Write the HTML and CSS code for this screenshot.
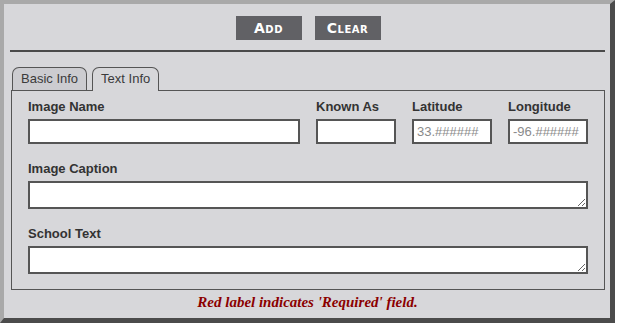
FILE: index.html
```html
<!DOCTYPE html>
<html lang="en">
<head>
    <meta charset="UTF-8">
    <title>Image Entry</title>
    <link rel="stylesheet" href="styles.css">
</head>
<body>
    <div class="frame">
        <div class="actions">
            <button class="action-btn">Add</button>
            <button class="action-btn">Clear</button>
        </div>
        <hr class="divider">

        <div class="tabs">
            <div class="tab">Basic Info</div>
            <div class="tab active">Text Info</div>
        </div>
        <div class="tab-panel">
            <div class="row top-row">
                <div class="field">
                    <label>Image Name</label>
                    <input type="text">
                </div>
                <div class="field">
                    <label>Known As</label>
                    <input type="text">
                </div>
                <div class="field">
                    <label>Latitude</label>
                    <input type="text" placeholder="33.######">
                </div>
                <div class="field">
                    <label>Longitude</label>
                    <input type="text" placeholder="-96.######">
                </div>
            </div>
            <div class="row">
                <div class="field">
                    <label>Image Caption</label>
                    <textarea></textarea>
                </div>
            </div>
            <div class="row">
                <div class="field">
                    <label>School Text</label>
                    <textarea></textarea>
                </div>
            </div>
        </div>
        <p class="note">Red label indicates 'Required' field.</p>
    </div>
</body>
</html>
```

FILE: styles.css
```css
* {
    margin: 0;
    padding: 0;
    box-sizing: border-box;
}

body {
    font-family: "Liberation Sans", Arial, sans-serif;
    background: #ffffff;
}

.frame {
    width: 615px;
    height: 323px;
    background: #d7d7da;
    border-style: solid;
    border-width: 4px 5px 5px 4px;
    border-color: #a9a9a9 #4b4b4b #4b4b4b #a9a9a9;
    padding: 12px 5px 0 6px;
}

.actions {
    display: flex;
    justify-content: center;
    gap: 13px;
    padding-left: 1px;
}

.action-btn {
    width: 66px;
    height: 24px;
    border: none;
    background: #616165;
    color: #ffffff;
    font-family: "DejaVu Sans", sans-serif;
    font-weight: bold;
    font-size: 14px;
    font-variant: small-caps;
    letter-spacing: 0.5px;
}

.divider {
    border: none;
    height: 2px;
    background: #4a4a4a;
    margin-top: 10px;
}

.tabs {
    display: flex;
    gap: 5px;
    margin-top: 15px;
    padding-left: 2px;
    position: relative;
    z-index: 1;
}

.tab {
    height: 23px;
    padding: 0 8px;
    border: 1px solid #555;
    border-bottom: none;
    border-radius: 7px 7px 0 0;
    background: #ccccd0;
    color: #3a3a3a;
    font-size: 13px;
    line-height: 22px;
}

.tab.active {
    background: #d7d7da;
    height: 24px;
    margin-bottom: -1px;
}

.tab-panel {
    margin-left: 1px;
    border: 1px solid #555;
    padding: 8px 16px 15px 16px;
}

.row {
    display: grid;
    grid-template-columns: 1fr;
    margin-top: 17px;
}

.row.top-row {
    grid-template-columns: 1fr 80px 80px 80px;
    gap: 16px;
    margin-top: 0;
}

.field {
    display: flex;
    flex-direction: column;
}

.field label {
    font-size: 13px;
    font-weight: bold;
    color: #333;
    line-height: 16px;
    margin-bottom: 4px;
}

.field input {
    height: 25px;
    border: 2px solid #555;
    background: #ffffff;
    font-family: "Liberation Sans", Arial, sans-serif;
    font-size: 13px;
    padding: 0 3px;
}

.field input::placeholder {
    color: #8a8a8a;
}

.field textarea {
    height: 28px;
    border: 2px solid #555;
    background: #ffffff;
    resize: vertical;
    font-family: "Liberation Sans", Arial, sans-serif;
}

.note {
    text-align: center;
    font-family: "Liberation Serif", "Times New Roman", serif;
    font-style: italic;
    font-weight: bold;
    font-size: 15px;
    color: #8b0000;
    margin-top: 4px;
}
```
